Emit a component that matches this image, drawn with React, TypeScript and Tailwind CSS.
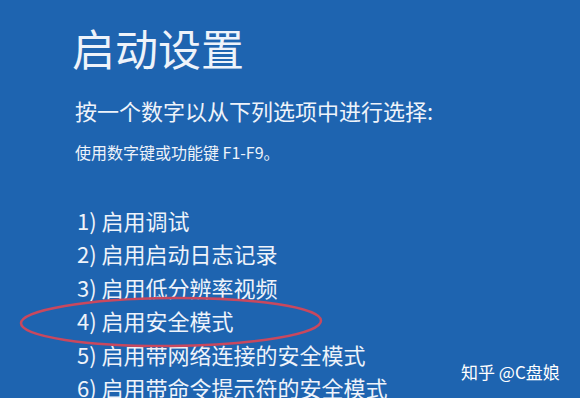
export default function App() {
  const items = [
    "1) 启用调试",
    "2) 启用启动日志记录",
    "3) 启用低分辨率视频",
    "4) 启用安全模式",
    "5) 启用带网络连接的安全模式",
    "6) 启用带命令提示符的安全模式",
  ];

  return (
    <main
      className="relative w-[580px] h-[398px] overflow-hidden bg-[#1e64b0] text-[#eef3fa]"
      style={{ fontFamily: '"Noto Sans CJK SC", "Noto Sans", sans-serif' }}
    >
      <div className="flex flex-col pl-[75px]">
        <h1 className="-ml-[3px] mt-[23px] text-[43px] leading-[48px]">启动设置</h1>
        <p className="mt-[25px] text-[22px] leading-[28px]">按一个数字以从下列选项中进行选择:</p>
        <p className="mt-[18px] text-[16px] leading-[20px]">使用数字键或功能键 F1-F9。</p>
        <ul className="mt-[42px] flex flex-col pl-[2px]">
          {items.map((t) => (
            <li key={t} className="text-[22px] leading-[33.4px] whitespace-nowrap">
              {t}
            </li>
          ))}
        </ul>
      </div>

      {/* red ellipse drawn over item 4 */}
      <svg className="absolute left-0 top-0" width="580" height="398">
        <ellipse
          cx="171"
          cy="322"
          rx="150"
          ry="24"
          fill="none"
          stroke="#c9485e"
          strokeWidth="2.5"
          transform="rotate(-0.5 171 322)"
        />
      </svg>

      <div className="absolute left-[461px] top-[361px] text-[17px] leading-[22px] text-white whitespace-nowrap">
        知乎 @C盘娘
      </div>
    </main>
  );
}
